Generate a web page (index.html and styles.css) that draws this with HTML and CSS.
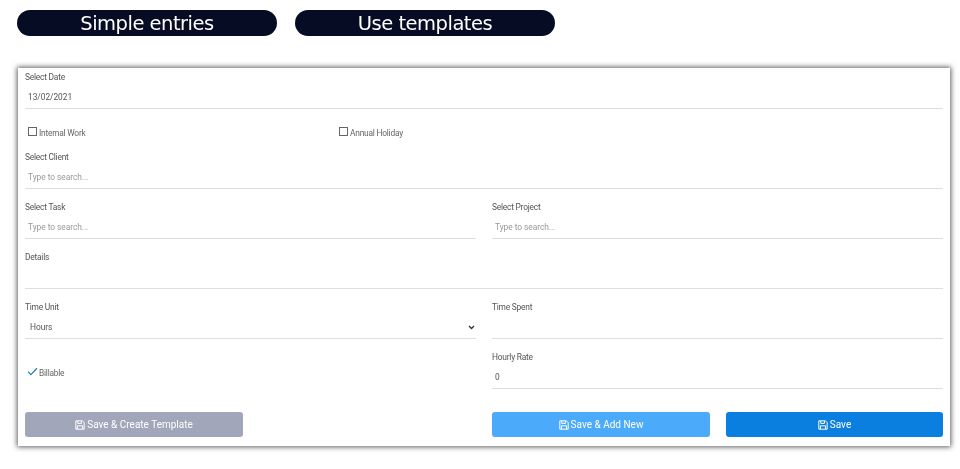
FILE: index.html
```html
<!DOCTYPE html>
<html lang="en">
<head>
<meta charset="utf-8">
<title>Time entry</title>
<link rel="stylesheet" href="styles.css">
</head>
<body>
<nav class="tabs">
  <a class="tab">Simple entries</a>
  <a class="tab">Use templates</a>
</nav>
<form class="card">
  <div class="field field-first">
    <label class="label">Select Date</label>
    <input class="control" value="13/02/2021">
  </div>
  <div class="checks">
    <label class="check"><span class="box"></span>Internal Work</label>
    <label class="check"><span class="box"></span>Annual Holiday</label>
  </div>
  <div class="field">
    <label class="label">Select Client</label>
    <input class="control" placeholder="Type to search...">
  </div>
  <div class="cols">
    <div class="field">
      <label class="label">Select Task</label>
      <input class="control" placeholder="Type to search...">
    </div>
    <div class="field">
      <label class="label">Select Project</label>
      <input class="control" placeholder="Type to search...">
    </div>
  </div>
  <div class="field">
    <label class="label">Details</label>
    <input class="control">
  </div>
  <div class="cols">
    <div class="field">
      <label class="label">Time Unit</label>
      <div class="control select">
        <span>Hours</span>
        <svg class="chevron" viewBox="0 0 8 6" width="7" height="5"><path d="M1 1.2 4 4.2 7 1.2" fill="none" stroke="#333" stroke-width="1.6"/></svg>
      </div>
    </div>
    <div class="field">
      <label class="label">Time Spent</label>
      <input class="control">
    </div>
  </div>
  <div class="cols">
    <label class="check billable">
      <svg class="tick" viewBox="0 0 12 10" width="11" height="9"><path d="M1 5.2 4.2 8.4 11 1.4" fill="none" stroke="#1f7fa8" stroke-width="1.3"/></svg>Billable
    </label>
    <div class="field">
      <label class="label">Hourly Rate</label>
      <input class="control" value="0">
    </div>
  </div>
  <div class="actions">
    <button type="button" class="btn btn-muted"><svg class="save" viewBox="0 0 10 10" width="10" height="10"><path d="M1 .8h6.4L9.2 2.6v6.6H.8V.8zM2.8 1v2.4h3.6V1M2.4 9V5.8h5.2V9" fill="none" stroke="currentColor" stroke-width="1"/></svg>Save &amp; Create Template</button>
    <span class="spacer"></span>
    <button type="button" class="btn btn-light"><svg class="save" viewBox="0 0 10 10" width="10" height="10"><path d="M1 .8h6.4L9.2 2.6v6.6H.8V.8zM2.8 1v2.4h3.6V1M2.4 9V5.8h5.2V9" fill="none" stroke="currentColor" stroke-width="1"/></svg>Save &amp; Add New</button>
    <button type="button" class="btn btn-primary"><svg class="save" viewBox="0 0 10 10" width="10" height="10"><path d="M1 .8h6.4L9.2 2.6v6.6H.8V.8zM2.8 1v2.4h3.6V1M2.4 9V5.8h5.2V9" fill="none" stroke="currentColor" stroke-width="1"/></svg>Save</button>
  </div>
</form>
</body>
</html>
```
FILE: styles.css
```css
* { box-sizing: border-box; }
html, body { margin: 0; background: #fff; }
body {
  width: 960px;
  height: 469px;
  overflow: hidden;
  font-family: Roboto, "Liberation Sans", sans-serif;
  color: #555;
  filter: blur(.3px);
}
.tabs {
  display: flex;
  gap: 18px;
  padding: 10px 0 0 17px;
  height: 68px;
}
.tab {
  width: 260px;
  height: 26px;
  border-radius: 13px;
  background: #050c24;
  color: #fff;
  font: 19.5px/28px "DejaVu Sans", sans-serif;
  letter-spacing: -.5px;
  text-align: center;
}
.card {
  width: 932px;
  height: 378px;
  margin-left: 18px;
  padding: 0 7px;
  background: #fff;
  box-shadow: 0 0 5px 1px rgba(40, 40, 40, .75);
}
.field { padding-top: 11px; display: flex; flex-direction: column; }
.field-first { padding-top: 2px; }
.label {
  height: 14px;
  font-size: 8.4px;
  line-height: 15px;
  letter-spacing: -.22px;
  color: #555;
}
.control {
  display: block;
  width: 100%;
  height: 25px;
  margin: 0;
  padding: 2px 3px 0;
  border: 0;
  border-bottom: 1px solid #ddd;
  outline: 0;
  background: none;
  font: 8.4px Roboto, sans-serif;
  letter-spacing: -.05px;
  color: #555;
}
.control::placeholder { color: #999; opacity: 1; }
.select {
  display: flex;
  align-items: center;
  justify-content: space-between;
  padding: 2px 1px 0 5px;
}
.checks {
  display: grid;
  grid-template-columns: 311px 1fr;
  height: 30px;
  padding: 17px 0 0 3px;
}
.check {
  display: flex;
  align-items: center;
  height: 14px;
  font-size: 8.4px;
  letter-spacing: -.22px;
  color: #666;
}
.box {
  width: 9px;
  height: 9px;
  margin: -3px 2px 0 0;
  border: 1px solid #666;
}
.cols {
  display: grid;
  grid-template-columns: 451px 451px;
  gap: 16px;
}
.billable { align-self: end; margin: 0 0 9px 2px; }
.tick { margin: -3px 1px 0 0; }
.actions {
  display: grid;
  grid-template-columns: 218px 249px 218px 233px;
  margin-top: 23px;
}
.actions .btn-primary { margin-left: 16px; width: 217px; }
.btn {
  display: flex;
  align-items: center;
  justify-content: center;
  gap: 2px;
  height: 25px;
  padding: 0;
  border: 0;
  border-radius: 3px;
  color: #fff;
  font: 400 10px Roboto, sans-serif;
}
.btn-muted { background: #a2a6ba; }
.btn-light { background: #4caafa; }
.btn-primary { background: #0a7fe0; }
.save { flex: none; }
```
